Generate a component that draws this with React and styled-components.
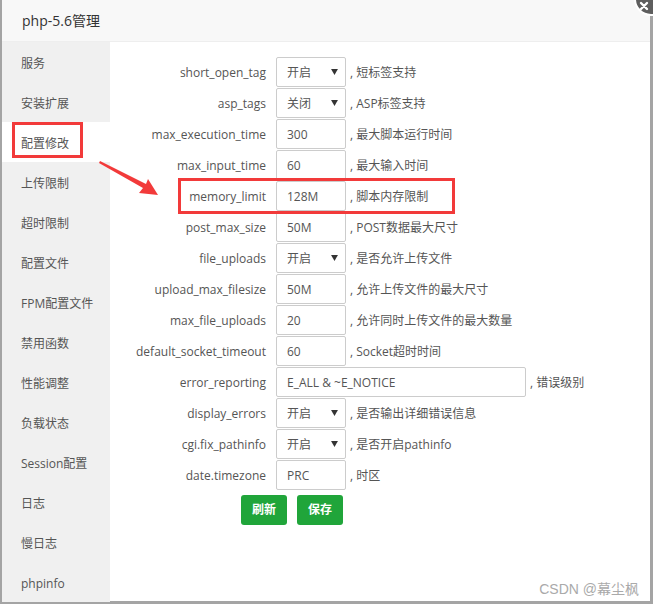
import styled, { createGlobalStyle } from "styled-components";

const GlobalStyle = createGlobalStyle`
    body {
        margin: 0;
        background: #fff;
        font-family: "Open Sans", "Noto Sans CJK SC", sans-serif;
    }
`;

const menu = [
    "服务", "安装扩展", "配置修改", "上传限制", "超时限制", "配置文件", "FPM配置文件",
    "禁用函数", "性能调整", "负载状态", "Session配置", "日志", "慢日志", "phpinfo",
];

const rows = [
    { name: "short_open_tag", value: "开启", select: true, note: "短标签支持" },
    { name: "asp_tags", value: "关闭", select: true, note: "ASP标签支持" },
    { name: "max_execution_time", value: "300", note: "最大脚本运行时间" },
    { name: "max_input_time", value: "60", note: "最大输入时间" },
    { name: "memory_limit", value: "128M", note: "脚本内存限制" },
    { name: "post_max_size", value: "50M", note: "POST数据最大尺寸" },
    { name: "file_uploads", value: "开启", select: true, note: "是否允许上传文件" },
    { name: "upload_max_filesize", value: "50M", note: "允许上传文件的最大尺寸" },
    { name: "max_file_uploads", value: "20", note: "允许同时上传文件的最大数量" },
    { name: "default_socket_timeout", value: "60", note: "Socket超时时间" },
    { name: "error_reporting", value: "E_ALL & ~E_NOTICE", wide: true, note: "错误级别" },
    { name: "display_errors", value: "开启", select: true, note: "是否输出详细错误信息" },
    { name: "cgi.fix_pathinfo", value: "开启", select: true, note: "是否开启pathinfo" },
    { name: "date.timezone", value: "PRC", note: "时区" },
];

export default function App() {
    return (
        <>
            <GlobalStyle />
            <Page>
                <Dialog>
                    <Header>php-5.6管理</Header>
                    <Body>
                        <Sidebar>
                            {menu.map((item) => (
                                <MenuItem key={item} active={item === "配置修改"}>
                                    {item}
                                </MenuItem>
                            ))}
                        </Sidebar>
                        <Content>
                            {rows.map((row) => (
                                <Row key={row.name}>
                                    <Label>{row.name}</Label>
                                    <Field wide={row.wide}>
                                        {row.value}
                                        {row.select && (
                                            <Caret viewBox="0 0 8 7">
                                                <polygon points="0,0 8,0 4,7" fill="#333" />
                                            </Caret>
                                        )}
                                    </Field>
                                    <Note>, {row.note}</Note>
                                </Row>
                            ))}
                            <Buttons>
                                <Button>刷新</Button>
                                <Button>保存</Button>
                            </Buttons>
                        </Content>
                    </Body>
                </Dialog>
                <Close viewBox="0 0 36 36">
                    <circle cx="18" cy="18" r="16" fill="#5e5e5e" stroke="#fff" strokeWidth="2" />
                    <path d="M8 22 L14 28 M14 22 L8 28" stroke="#fff" strokeWidth="2.4" strokeLinecap="round" />
                </Close>
                <Mark left={12} top={122} width={71} height={36} />
                <Mark left={178} top={178} width={277} height={36} />
                <Arrow viewBox="0 0 70 45">
                    <polygon points="5,6 51,29 53,24 63,40 44,38 48,33 4,8" fill="#f23a3a" />
                </Arrow>
                <Watermark>CSDN @幕尘枫</Watermark>
            </Page>
        </>
    );
}

const Page = styled.div`
    position: relative;
    width: 653px;
    height: 604px;
    overflow: hidden;
`;

const Dialog = styled.div`
    box-sizing: border-box;
    width: 653px;
    height: 604px;
    border: 0 solid #a4a4a4;
    border-width: 0 3px 3px 2px;
    display: flex;
    flex-direction: column;
    background: #fff;
`;

const Header = styled.div`
    box-sizing: border-box;
    height: 42px;
    padding-left: 20px;
    line-height: 42px;
    font-size: 14px;
    color: #333;
    background: #f8f8f8;
    border-bottom: 1px solid #eee;
`;

const Body = styled.div`
    flex: 1;
    display: flex;
`;

const Sidebar = styled.div`
    width: 108px;
    background: #f0f0f0;
`;

const MenuItem = styled.div`
    box-sizing: border-box;
    height: 40px;
    line-height: 40px;
    padding: 2px 0 0 19px;
    font-size: 12px;
    color: #555;
    background: ${(p) => (p.active ? "#fff" : "transparent")};
`;

const Content = styled.div`
    flex: 1;
    padding-top: 15px;
`;

const Row = styled.div`
    display: flex;
    align-items: center;
    height: 30px;
    margin-bottom: 1px;
`;

const Label = styled.div`
    box-sizing: border-box;
    width: 166px;
    padding-right: 10px;
    text-align: right;
    font-size: 12px;
    color: #555;
`;

const Field = styled.div`
    box-sizing: border-box;
    width: ${(p) => (p.wide ? "250px" : "70px")};
    height: 30px;
    padding: 0 10px;
    display: flex;
    align-items: center;
    justify-content: space-between;
    border: 1px solid #ccc;
    border-radius: 2px;
    font-size: 12px;
    color: #555;
`;

const Caret = styled.svg`
    width: 7px;
    height: 6px;
    margin-right: -3px;
`;

const Note = styled.div`
    margin-left: 4px;
    font-size: 12px;
    color: #555;
`;

const Buttons = styled.div`
    display: flex;
    gap: 10px;
    padding-left: 131px;
    margin-top: 5px;
`;

const Button = styled.div`
    width: 46px;
    height: 30px;
    line-height: 30px;
    text-align: center;
    border-radius: 3px;
    background: #20a53a;
    color: #fff;
    font-size: 12px;
    font-weight: bold;
`;

const Close = styled.svg`
    position: absolute;
    left: 633px;
    top: -19px;
    width: 36px;
    height: 36px;
`;

const Mark = styled.div`
    position: absolute;
    box-sizing: border-box;
    left: ${(p) => p.left}px;
    top: ${(p) => p.top}px;
    width: ${(p) => p.width}px;
    height: ${(p) => p.height}px;
    border: 3px solid #f23a3a;
`;

const Arrow = styled.svg`
    position: absolute;
    left: 95px;
    top: 155px;
    width: 70px;
    height: 45px;
`;

const Watermark = styled.div`
    position: absolute;
    right: 14px;
    bottom: 6px;
    font-family: "Liberation Sans", "Noto Sans CJK SC", sans-serif;
    font-size: 14px;
    color: #aaa;
`;
